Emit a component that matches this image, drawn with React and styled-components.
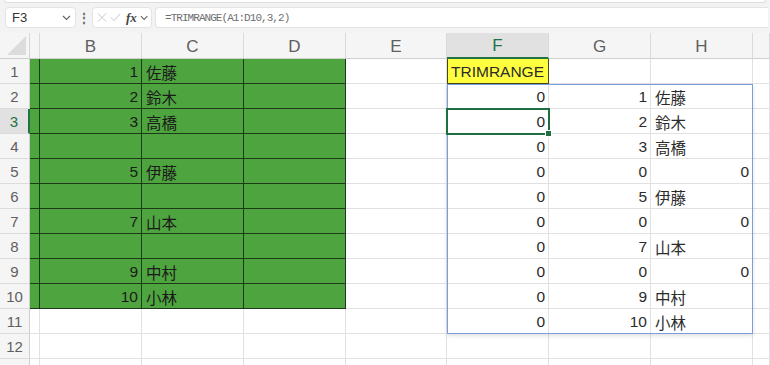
import React from 'react';
import styled, { createGlobalStyle } from 'styled-components';

const GlobalStyle = createGlobalStyle`
  html, body {
    margin: 0;
    padding: 0;
    background: #ffffff;
    overflow: hidden;
  }
  body {
    font-family: 'Liberation Sans', 'Noto Sans CJK JP', sans-serif;
  }
`;

const GREEN = '#4ea43f';
const DARK = '#1d3a18';
const OLIVE = '#4a4a10';

const Page = styled.div`
  width: 770px;
  height: 365px;
  overflow: hidden;
  display: flex;
  flex-direction: column;
`;

const FormulaArea = styled.div`
  height: 33px;
  flex: none;
  background: #f3f3f3;
  display: flex;
  flex-direction: column;
`;

const RibbonEdge = styled.div`
  height: 2px;
  margin: 0 4px;
  background: #ffffff;
  border: 1px solid #dedede;
  border-top: none;
  border-radius: 0 0 5px 5px;
`;

const FormulaRow = styled.div`
  display: flex;
  align-items: center;
  gap: 3px;
  padding: 4px 2px 0 5px;
`;

const Box = styled.div`
  height: 21px;
  box-sizing: border-box;
  background: #ffffff;
  border: 1px solid #e3e3e3;
  border-radius: 4px;
  display: flex;
  align-items: center;
`;

const NameBox = styled(Box)`
  width: 71px;
  padding: 0 4px 0 6px;
  justify-content: space-between;
  font-size: 13px;
  color: #333;
`;

const Dots = styled.div`
  width: 10px;
  display: flex;
  justify-content: center;
  color: #666;
  font-size: 12px;
  font-weight: bold;
`;

const FuncBox = styled(Box)`
  width: 60px;
  padding: 0 3px 0 4px;
  gap: 3px;
`;

const FxLabel = styled.span`
  font-family: 'Liberation Serif', serif;
  font-style: italic;
  font-weight: bold;
  font-size: 13px;
  color: #444;
  margin-left: 2px;
`;

const FormulaInput = styled(Box)`
  flex: 1;
  padding-left: 9px;
  font-family: 'Liberation Mono', monospace;
  font-size: 11px;
  letter-spacing: -0.95px;
  color: #6f6f6f;
  border-radius: 4px 0 0 4px;
  border-right: none;
`;

const Sheet = styled.div`
  position: relative;
  display: grid;
  grid-template-columns: 30px 10px 102px 102px 102px 101px 102px 102px 102px 1fr;
  grid-template-rows: 26px;
  grid-auto-rows: 25px;
  font-size: 15.5px;
  color: #262626;
`;

const Corner = styled.div`
  background: #f5f5f5;
  border-right: 1px solid #d6d6d6;
  border-bottom: 1px solid #cfcfcf;
  position: relative;
  &::after {
    content: '';
    position: absolute;
    right: 3px;
    bottom: 3px;
    width: 19px;
    height: 19px;
    background: #dcdcdc;
    clip-path: polygon(100% 0, 100% 100%, 0 100%);
  }
`;

const ColHead = styled.div`
  background: ${({ $active }) => ($active ? '#e1e1e1' : '#f5f5f5')};
  border-right: 1px solid #d9d9d9;
  border-bottom: ${({ $active }) => ($active ? '2px solid #217346' : '1px solid #cfcfcf')};
  color: ${({ $active }) => ($active ? '#217346' : '#5f5f5f')};
  font-size: 17px;
  display: flex;
  align-items: center;
  justify-content: center;
  padding-top: 2px;
  box-sizing: border-box;
`;

const RowHead = styled.div`
  background: ${({ $active }) => ($active ? '#e1e1e1' : '#f5f5f5')};
  border-right: ${({ $active }) => ($active ? '2px solid #217346' : '1px solid #d0d0d0')};
  border-bottom: 1px solid #dcdcdc;
  color: ${({ $active }) => ($active ? '#217346' : '#5f5f5f')};
  font-size: 15px;
  display: flex;
  align-items: center;
  justify-content: center;
  box-sizing: border-box;
`;

const Cell = styled.div`
  box-sizing: border-box;
  background: ${({ $fill }) => $fill || '#ffffff'};
  border-right: 1px solid ${({ $line }) => $line || '#e1e1e1'};
  border-bottom: 1px solid ${({ $line }) => $line || '#e1e1e1'};
  box-shadow: ${({ $boxed }) => ($boxed ? `inset 1px 0 0 ${OLIVE}` : 'none')};
  display: flex;
  align-items: center;
  justify-content: ${({ $right }) => ($right ? 'flex-end' : 'flex-start')};
  padding: 1px 3px 0 4px;
  white-space: nowrap;
  overflow: hidden;
  color: ${({ $fill }) => ($fill === GREEN ? '#1a1a1a' : '#2b2b2b')};
`;

const SpillFrame = styled.div`
  position: absolute;
  left: 447px;
  top: 51px;
  width: 306px;
  height: 250px;
  box-sizing: border-box;
  border: 1px solid #7b9de0;
  box-shadow: 0 2px 4px rgba(0, 0, 0, 0.12);
  pointer-events: none;
`;

const Selection = styled.div`
  position: absolute;
  left: 446px;
  top: 75px;
  width: 104px;
  height: 27px;
  box-sizing: border-box;
  border: 2px solid #1e6e42;
  pointer-events: none;
  &::after {
    content: '';
    position: absolute;
    right: -4px;
    bottom: -4px;
    width: 5px;
    height: 5px;
    background: #1e6e42;
    border: 1px solid #fff;
  }
`;

const columns = ['A', 'B', 'C', 'D', 'E', 'F', 'G', 'H', 'I'];
const shownHeads = ['B', 'C', 'D', 'E', 'F', 'G', 'H'];

const left = [
  [1, '佐藤'], [2, '鈴木'], [3, '高橋'], ['', ''], [5, '伊藤'],
  ['', ''], [7, '山本'], ['', ''], [9, '中村'], [10, '小林'],
];

const spill = [
  [0, 1, '佐藤'], [0, 2, '鈴木'], [0, 3, '高橋'], [0, 0, 0], [0, 5, '伊藤'],
  [0, 0, 0], [0, 7, '山本'], [0, 0, 0], [0, 9, '中村'], [0, 10, '小林'],
];

const isNum = (v) => typeof v === 'number';

const Chevron = () => (
  <svg width="9" height="6" viewBox="0 0 9 6">
    <path d="M1 1 L4.5 4.5 L8 1" fill="none" stroke="#666" strokeWidth="1.2" />
  </svg>
);

function renderRow(r) {
  const cells = [];
  const inLeft = r >= 1 && r <= 10;
  const l = inLeft ? left[r - 1] : null;
  const s = r >= 2 && r <= 11 ? spill[r - 2] : null;
  const fill = inLeft ? GREEN : undefined;
  const line = inLeft ? DARK : undefined;

  cells.push(<Cell key="A" $fill={fill} $line={line} />);
  cells.push(
    <Cell key="B" $right $fill={fill} $line={line}>
      {l ? l[0] : ''}
    </Cell>
  );
  cells.push(
    <Cell key="C" $fill={fill} $line={line}>
      {l ? l[1] : ''}
    </Cell>
  );
  cells.push(<Cell key="D" $fill={fill} $line={line} />);
  cells.push(<Cell key="E" />);

  if (r === 1) {
    cells.push(
      <Cell key="F" $fill="#ffff40" $line={OLIVE} $boxed>
        TRIMRANGE
      </Cell>
    );
    cells.push(<Cell key="G" />);
    cells.push(<Cell key="H" />);
  } else {
    ['F', 'G', 'H'].forEach((c, i) => {
      const v = s ? s[i] : '';
      cells.push(
        <Cell key={c} $right={isNum(v)}>
          {v}
        </Cell>
      );
    });
  }
  cells.push(<Cell key="I" />);
  return cells;
}

export default function App() {
  const rows = Array.from({ length: 13 }, (_, i) => i + 1);
  return (
    <Page>
      <GlobalStyle />
      <FormulaArea>
        <RibbonEdge />
        <FormulaRow>
          <NameBox>
            <span>F3</span>
            <Chevron />
          </NameBox>
          <Dots>⋮</Dots>
          <FuncBox>
            <svg width="11" height="11" viewBox="0 0 11 11">
              <path d="M1 1 L10 10 M10 1 L1 10" stroke="#c4c4c4" strokeWidth="1" />
            </svg>
            <svg width="12" height="11" viewBox="0 0 12 11">
              <path d="M1 5.5 L4.5 9 L11 1.5" fill="none" stroke="#c4c4c4" strokeWidth="1" />
            </svg>
            <FxLabel>fx</FxLabel>
            <Chevron />
          </FuncBox>
          <FormulaInput>=TRIMRANGE(A1:D10,3,2)</FormulaInput>
        </FormulaRow>
      </FormulaArea>
      <Sheet>
        <Corner />
        {columns.map((c) => (
          <ColHead key={c} $active={c === 'F'}>
            {shownHeads.includes(c) ? c : ''}
          </ColHead>
        ))}
        {rows.map((r) => (
          <React.Fragment key={r}>
            <RowHead $active={r === 3}>{r <= 12 ? r : ''}</RowHead>
            {renderRow(r)}
          </React.Fragment>
        ))}
        <SpillFrame />
        <Selection />
      </Sheet>
    </Page>
  );
}
